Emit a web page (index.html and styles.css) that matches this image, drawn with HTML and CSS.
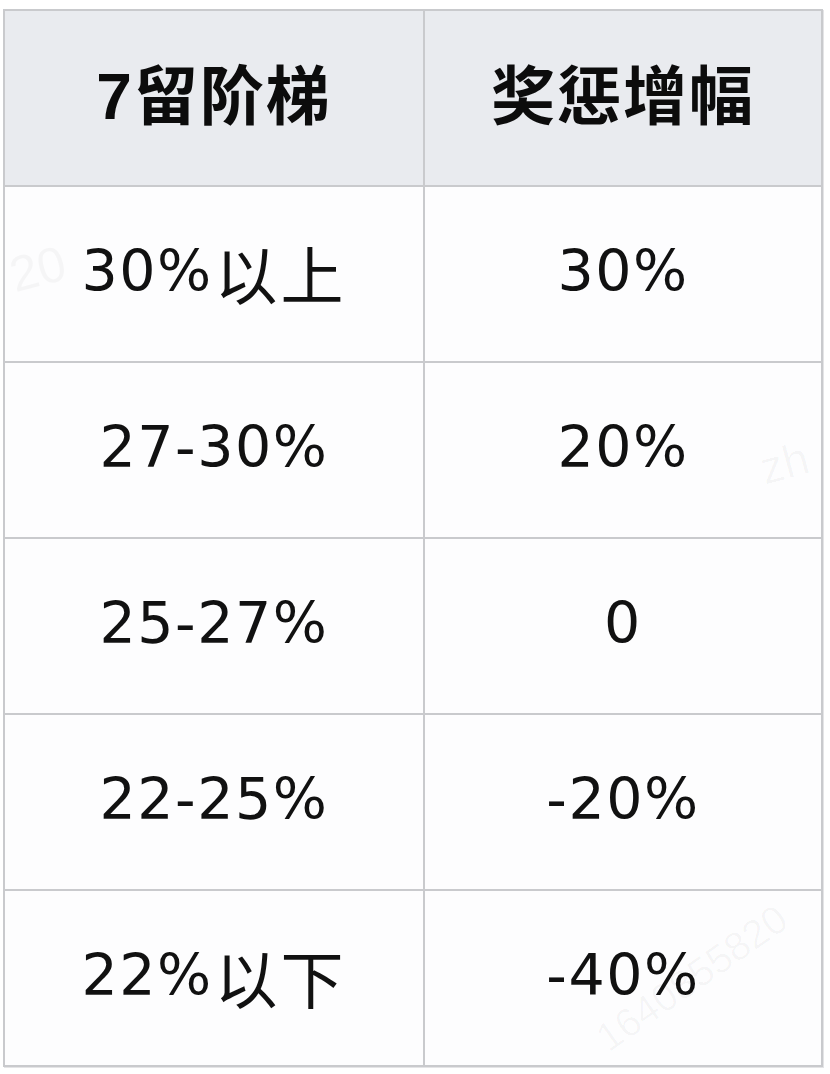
FILE: index.html
```html
<!DOCTYPE html>
<html lang="zh">
<head>
<meta charset="utf-8">
<link rel="stylesheet" href="styles.css">
</head>
<body>
<div class="page">
  <div class="table">
    <div class="cell head">7留阶梯</div>
    <div class="cell head">奖惩增幅</div>
    <div class="cell">30%<span class="cjk">以上</span></div>
    <div class="cell">30%</div>
    <div class="cell">27-30%</div>
    <div class="cell">20%</div>
    <div class="cell">25-27%</div>
    <div class="cell">0</div>
    <div class="cell">22-25%</div>
    <div class="cell">-20%</div>
    <div class="cell">22%<span class="cjk">以下</span></div>
    <div class="cell">-40%</div>
  </div>
  <div class="wm wm1">20</div>
  <div class="wm wm2">zh</div>
  <div class="wm wm3">1640855820</div>
</div>
</body>
</html>
```
FILE: styles.css
```css
html, body {
  margin: 0;
  padding: 0;
  background: #ffffff;
}
.page {
  position: relative;
  width: 830px;
  height: 1074px;
  padding: 9px 0 0 3px;
  box-sizing: border-box;
  overflow: hidden;
}
.table {
  display: grid;
  grid-template-columns: 420px 398px;
  grid-auto-rows: 176px;
  width: 820px;
  border-top: 2px solid #c9cacd;
  border-left: 2px solid #c9cacd;
  box-sizing: border-box;
  background: #fdfdfe;
  box-shadow: 1px 1px 0 #e4e4e6;
}
.cell {
  display: flex;
  align-items: center;
  justify-content: center;
  border-right: 2px solid #c9cacd;
  border-bottom: 2px solid #c9cacd;
  font-family: "DejaVu Sans", "Noto Sans CJK SC", sans-serif;
  font-size: 57px;
  line-height: 1;
  color: #111111;
  letter-spacing: 1.5px;
  padding-bottom: 6px;
  box-sizing: border-box;
}
.cjk {
  font-family: "Noto Sans CJK SC", sans-serif;
  font-size: 63px;
  font-weight: 400;
  margin-left: 2px;
  letter-spacing: 3px;
}
.head {
  background: #e9ebef;
  font-weight: 700;
  font-family: "Liberation Sans", "Noto Sans CJK SC", sans-serif;
  font-size: 64px;
  letter-spacing: 2px;
  color: #0c0c0c;
  padding-bottom: 2px;
}
.wm {
  position: absolute;
  font-family: "Liberation Sans", sans-serif;
  color: rgba(0, 0, 0, 0.03);
  font-size: 50px;
  line-height: 1;
  pointer-events: none;
}
.wm1 {
  left: 10px;
  top: 244px;
  transform: rotate(-15deg);
}
.wm2 {
  left: 760px;
  top: 440px;
  font-size: 46px;
  transform: rotate(-15deg);
}
.wm3 {
  left: 612px;
  top: 1018px;
  font-size: 40px;
  transform: rotate(-35deg);
  transform-origin: left bottom;
}
```
